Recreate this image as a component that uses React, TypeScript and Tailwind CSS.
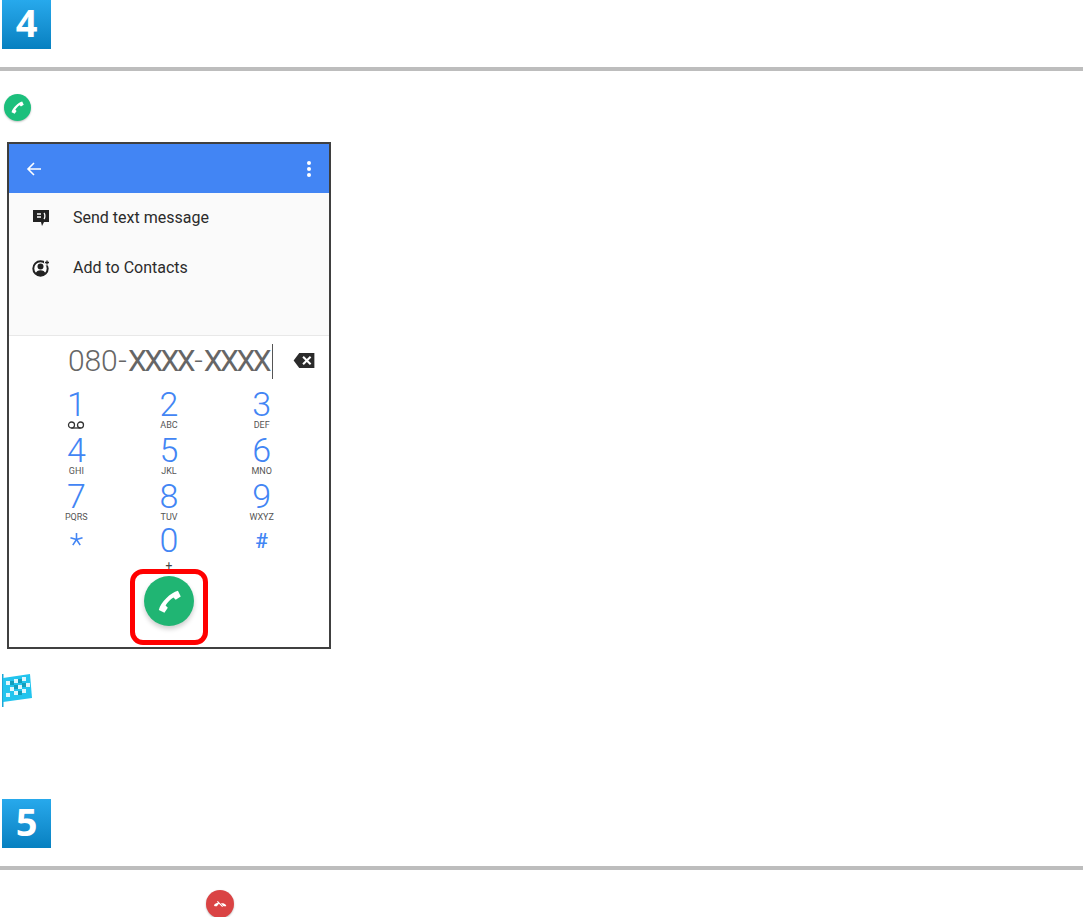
const Handset = ({ className }: { className: string }) => (
  <svg viewBox="0 0 24 24" className={className} fill="currentColor">
    <path d="M2.500 19.500C4 13 13 4 19.500 2.500L22 7.500L17.500 10.500L15.500 8.500C13 10 10 13 8.500 15.500L10.500 17.500L7.500 22Z" />
  </svg>
);

const StepBadge = ({ n }: { n: number }) => (
  <div className="ml-[2px] flex h-[49px] w-[49px] items-center justify-center bg-gradient-to-b from-[#27a9ec] to-[#0680c0] pb-[5px] font-['Open_Sans',sans-serif] text-[38px] leading-none font-bold text-white">
    {n}
  </div>
);

const keys = [
  { d: '1', l: '' },
  { d: '2', l: 'ABC' },
  { d: '3', l: 'DEF' },
  { d: '4', l: 'GHI' },
  { d: '5', l: 'JKL' },
  { d: '6', l: 'MNO' },
  { d: '7', l: 'PQRS' },
  { d: '8', l: 'TUV' },
  { d: '9', l: 'WXYZ' },
];

function Phone() {
  return (
    <div className="relative ml-[7px] h-[507px] w-[324px] border-2 border-[#404040] bg-white font-['Roboto',sans-serif]">
      <div className="flex h-[49px] items-center justify-between bg-[#4285f4] pr-[18px] pl-[17px] shadow-[0_1px_2px_rgba(0,0,0,0.2)]">
        <svg viewBox="0 0 16 16" className="h-4 w-4 text-white" fill="none" stroke="currentColor" strokeWidth="1.6">
          <path d="M15 8H2M8 2 2 8l6 6" />
        </svg>
        <div className="flex flex-col gap-[2px]">
          <span className="h-[4px] w-[4px] rounded-full bg-white" />
          <span className="h-[4px] w-[4px] rounded-full bg-white" />
          <span className="h-[4px] w-[4px] rounded-full bg-white" />
        </div>
      </div>
      <div className="h-[143px] border-b border-[#e8e8e8] bg-[#fafafa] pt-[15px] text-[16px] text-[#2b2b2b]">
        <div className="flex h-[20px] items-center pl-[23px]">
          <svg viewBox="0 0 18 18" className="h-[18px] w-[18px]">
            <path d="M1 1h16v12h-5l-2 4-1-4H1z" fill="#222" />
            <path d="M5 5h4M5 8h4M12 4c1.200 1.500 1.200 4.500 0 6" stroke="#fff" strokeWidth="1.300" fill="none" />
          </svg>
          <span className="ml-[23px]">Send text message</span>
        </div>
        <div className="mt-[30px] flex h-[20px] items-center pl-[23px]">
          <svg viewBox="0 0 18 18" className="h-[18px] w-[18px]">
            <circle cx="8.500" cy="9.500" r="7.200" fill="#fff" stroke="#222" strokeWidth="2" />
            <circle cx="8.500" cy="7.500" r="3" fill="#222" />
            <path d="M3.500 14.500c1-4.500 9-4.500 10 0l-2 2h-6z" fill="#222" />
            <circle cx="15" cy="3.500" r="3" fill="#fafafa" />
            <path d="M15 1.500v4M13 3.500h4" stroke="#222" strokeWidth="1.300" />
          </svg>
          <span className="ml-[23px]">Add to Contacts</span>
        </div>
      </div>
      <div className="relative flex h-[50px] items-center pl-[59px] text-[30px] leading-none font-light text-[#666]">
        <span className="tracking-[-0.2px]">080</span>
        <span className="px-[1px]">-</span>
        <span className="font-normal tracking-[-2.500px] text-[#666]">XXXX</span>
        <span className="px-[1px]">-</span>
        <span className="font-normal tracking-[-2.500px] text-[#666]">XXXX</span>
        <span className="ml-[3px] h-[35px] w-px bg-[#555]" />
        <svg viewBox="0 0 24 18" className="absolute top-[16px] right-[13px] h-[17px] w-[24px]">
          <path d="M7 1h16v16H7L1 9z" fill="#2b2b2b" />
          <path d="M11 5l8 8M19 5l-8 8" stroke="#fff" strokeWidth="2.200" />
        </svg>
      </div>
      <div className="ml-[21px] grid w-[278px] grid-cols-3">
        {keys.map((k) => (
          <div key={k.d} className="flex h-[46px] flex-col items-center">
            <span className="mt-[3px] h-[30px] text-[34px] leading-[30px] font-light text-[#4285f4]">{k.d}</span>
            {k.l ? (
              <span className="mt-[1px] text-[9px] leading-[10px] text-[#555]">{k.l}</span>
            ) : (
              <svg viewBox="0 0 18 8" className="mt-[2px] h-[8px] w-[18px]" fill="none" stroke="#333" strokeWidth="1.300">
                <circle cx="4.500" cy="4" r="3" />
                <circle cx="13.500" cy="4" r="3" />
                <path d="M4.500 7h9" />
              </svg>
            )}
          </div>
        ))}
        <div className="flex h-[46px] justify-center pt-[2px] text-[#4285f4]">
          <svg viewBox="0 0 14 14" className="mt-[7px] h-[13px] w-[13px]" fill="none" stroke="currentColor" strokeWidth="1.700">
            <path d="M7 0v7M7 7 .5 5M7 7l6.500-2M7 7l-4 6M7 7l4 6" />
          </svg>
        </div>
        <div className="flex h-[46px] flex-col items-center">
          <span className="mt-[1px] h-[30px] text-[34px] leading-[30px] font-light text-[#4285f4]">0</span>
          <span className="mt-[5px] text-[12px] leading-[12px] text-[#444]">+</span>
        </div>
        <div className="flex h-[46px] justify-center pt-[7px] text-[21px] leading-[20px] font-medium text-[#4285f4]">#</div>
      </div>
      <div className="mt-[6px] flex justify-center">
        <div className="flex h-[50px] w-[50px] items-center justify-center rounded-full bg-[#20b573] text-white shadow-[0_3px_5px_rgba(0,0,0,0.2)]">
          <Handset className="h-[27px] w-[27px]" />
        </div>
      </div>
      <div className="absolute top-[425px] left-[121px] h-[76px] w-[78px] rounded-[13px] border-[5px] border-[#ff0000]" />
    </div>
  );
}

export default function App() {
  return (
    <div className="h-[917px] w-[1083px] overflow-hidden bg-white">
      <StepBadge n={4} />
      <div className="mt-[18px] h-[4px] bg-[#bdbdbd]" />
      <div className="mt-[23px] ml-[4px] flex h-[27px] w-[27px] items-center justify-center rounded-full bg-[#1cbf7c] text-white shadow-[0_1px_2px_rgba(0,0,0,0.25)]">
        <Handset className="h-[15px] w-[15px]" />
      </div>
      <div className="mt-[21px]">
        <Phone />
      </div>
      <svg viewBox="0 0 30 33" className="mt-[25px] ml-[2px] h-[33px] w-[30px] blur-[0.6px]">
        <rect x="0" y="0" width="1.500" height="33" fill="#1aa7d8" />
        <path d="M1 4 28 0l2 24-29 4z" fill="#22c4ee" />
        <g fill="#fff" opacity=".85">
          <rect x="4" y="7" width="4" height="4" />
          <rect x="12" y="5" width="4" height="4" />
          <rect x="20" y="3" width="4" height="4" />
          <rect x="8" y="13" width="4" height="4" />
          <rect x="16" y="11" width="4" height="4" />
          <rect x="24" y="9" width="4" height="4" />
          <rect x="4" y="19" width="4" height="4" />
          <rect x="12" y="17" width="4" height="4" />
          <rect x="20" y="15" width="4" height="4" />
        </g>
        <g fill="#0e8fa8" opacity=".7">
          <rect x="8" y="7" width="4" height="4" />
          <rect x="16" y="5" width="4" height="4" />
          <rect x="12" y="11" width="4" height="4" />
          <rect x="20" y="9" width="4" height="4" />
          <rect x="16" y="17" width="4" height="4" />
        </g>
      </svg>
      <div className="mt-[92px]">
        <StepBadge n={5} />
      </div>
      <div className="mt-[18px] h-[4px] bg-[#bdbdbd]" />
      <div className="mt-[20px] ml-[206px] flex h-[28px] w-[28px] items-center justify-center rounded-full bg-[#da4344] text-white shadow-[0_1px_2px_rgba(0,0,0,0.25)]">
        <svg viewBox="0 0 16 16" className="h-[14px] w-[14px]" fill="currentColor">
          <path d="M1 9.500c1-2 3-3 5-3l1 1-1.500 1.500-1 1.500H2zM9 7.500c2-.5 4-.5 6 2v1h-3z" />
          <path d="M5 5l6 6" stroke="currentColor" strokeWidth="1.400" />
        </svg>
      </div>
    </div>
  );
}
